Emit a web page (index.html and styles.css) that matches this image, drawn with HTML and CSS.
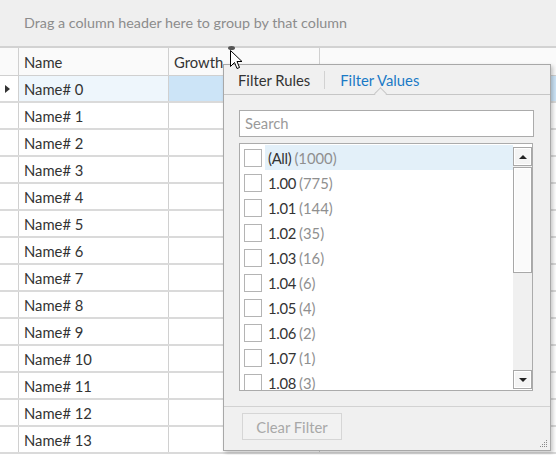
FILE: index.html
```html
<!DOCTYPE html>
<html>
<head>
<meta charset="utf-8">
<link rel="stylesheet" href="styles.css">
</head>
<body>
<div class="app">
  <div class="group-panel">Drag a column header here to group by that column</div>
  <div class="grid">
    <div class="row hdr">
      <div class="c c0"></div>
      <div class="c c1">Name</div>
      <div class="c c2">Growth</div>
      <div class="c c3"></div>
    </div>
    <div class="row sel">
      <div class="c c0"><span class="tri"></span></div>
      <div class="c c1 focus">Name# 0</div>
      <div class="c c2"></div>
      <div class="c c3"></div>
    </div>
    <div class="row"><div class="c c0"></div><div class="c c1">Name# 1</div><div class="c c2"></div><div class="c c3"></div></div>
    <div class="row"><div class="c c0"></div><div class="c c1">Name# 2</div><div class="c c2"></div><div class="c c3"></div></div>
    <div class="row"><div class="c c0"></div><div class="c c1">Name# 3</div><div class="c c2"></div><div class="c c3"></div></div>
    <div class="row"><div class="c c0"></div><div class="c c1">Name# 4</div><div class="c c2"></div><div class="c c3"></div></div>
    <div class="row"><div class="c c0"></div><div class="c c1">Name# 5</div><div class="c c2"></div><div class="c c3"></div></div>
    <div class="row"><div class="c c0"></div><div class="c c1">Name# 6</div><div class="c c2"></div><div class="c c3"></div></div>
    <div class="row"><div class="c c0"></div><div class="c c1">Name# 7</div><div class="c c2"></div><div class="c c3"></div></div>
    <div class="row"><div class="c c0"></div><div class="c c1">Name# 8</div><div class="c c2"></div><div class="c c3"></div></div>
    <div class="row"><div class="c c0"></div><div class="c c1">Name# 9</div><div class="c c2"></div><div class="c c3"></div></div>
    <div class="row"><div class="c c0"></div><div class="c c1">Name# 10</div><div class="c c2"></div><div class="c c3"></div></div>
    <div class="row"><div class="c c0"></div><div class="c c1">Name# 11</div><div class="c c2"></div><div class="c c3"></div></div>
    <div class="row"><div class="c c0"></div><div class="c c1">Name# 12</div><div class="c c2"></div><div class="c c3"></div></div>
    <div class="row"><div class="c c0"></div><div class="c c1">Name# 13</div><div class="c c2"></div><div class="c c3"></div></div>
  </div>

  <div class="popup">
    <div class="tabs">
      <span class="tab">Filter Rules</span>
      <span class="tab-sep"></span>
      <span class="tab active">Filter Values</span>
    </div>
    <div class="body">
      <div class="search">Search</div>
      <div class="list">
        <div class="items">
          <div class="item hl"><span class="cb"></span><span class="lbl">(All)</span><span class="cnt">(1000)</span></div>
          <div class="item"><span class="cb"></span><span class="lbl">1.00</span><span class="cnt">(775)</span></div>
          <div class="item"><span class="cb"></span><span class="lbl">1.01</span><span class="cnt">(144)</span></div>
          <div class="item"><span class="cb"></span><span class="lbl">1.02</span><span class="cnt">(35)</span></div>
          <div class="item"><span class="cb"></span><span class="lbl">1.03</span><span class="cnt">(16)</span></div>
          <div class="item"><span class="cb"></span><span class="lbl">1.04</span><span class="cnt">(6)</span></div>
          <div class="item"><span class="cb"></span><span class="lbl">1.05</span><span class="cnt">(4)</span></div>
          <div class="item"><span class="cb"></span><span class="lbl">1.06</span><span class="cnt">(2)</span></div>
          <div class="item"><span class="cb"></span><span class="lbl">1.07</span><span class="cnt">(1)</span></div>
          <div class="item"><span class="cb"></span><span class="lbl">1.08</span><span class="cnt">(3)</span></div>
        </div>
        <div class="sbar">
          <div class="sbtn"><span class="up"></span></div>
          <div class="thumb"></div>
          <div class="track"></div>
          <div class="sbtn"><span class="down"></span></div>
        </div>
      </div>
    </div>
    <div class="footer">
      <div class="btn">Clear Filter</div>
    </div>
    <svg class="grip" width="8" height="8" viewBox="0 0 8 8">
      <rect x="6" y="0" width="1" height="1" fill="#8a8a8a"/>
      <rect x="4" y="2" width="1" height="1" fill="#8a8a8a"/>
      <rect x="6" y="2" width="1" height="1" fill="#8a8a8a"/>
      <rect x="2" y="4" width="1" height="1" fill="#8a8a8a"/>
      <rect x="4" y="4" width="1" height="1" fill="#8a8a8a"/>
      <rect x="6" y="4" width="1" height="1" fill="#8a8a8a"/>
      <rect x="0" y="6" width="1" height="1" fill="#8a8a8a"/>
      <rect x="2" y="6" width="1" height="1" fill="#8a8a8a"/>
      <rect x="4" y="6" width="1" height="1" fill="#8a8a8a"/>
      <rect x="6" y="6" width="1" height="1" fill="#8a8a8a"/>
    </svg>
  </div>

  <span class="filter-dot"></span>
  <svg class="cursor" width="13" height="20" viewBox="0 0 13 20">
    <path d="M0.5 0.5 L0.5 16.5 L4.5 12.5 L7 18.5 L9.5 17.5 L7 11.5 L12 11.5 Z" fill="#fff" stroke="#000" stroke-width="1" stroke-linejoin="miter"/>
  </svg>
</div>
</body>
</html>
```

FILE: styles.css
```css
* { box-sizing: border-box; }
html, body { margin: 0; padding: 0; }
body {
  width: 556px;
  height: 455px;
  overflow: hidden;
  background: #fff;
  font-family: "Lato", "Open Sans", sans-serif;
  font-size: 14.8px;
  color: #333;
}
.app { position: relative; width: 556px; height: 455px; overflow: hidden; }

.group-panel {
  height: 48px;
  background: #efefef;
  border-bottom: 2px solid #d2d2d2;
  color: #8c8c8c;
  padding-left: 24px;
  line-height: 46px;
  font-size: 14.3px;
}

.grid { display: flex; flex-direction: column; }
.row {
  display: flex;
  height: 27px;
  border-bottom: 2px solid #dadada;
}
.row.hdr { height: 28px; background: #fafafa; border-bottom: 1px solid #d0d0d0; }
.c {
  height: 100%;
  display: flex;
  align-items: center;
  padding-left: 5px;
}
.c0 { width: 19px; border-right: 1px solid #d0d0d0; padding-left: 0; justify-content: center; }
.c1 { width: 150px; border-right: 1px solid #d0d0d0; }
.c2 { width: 151px; border-right: 1px solid #d0d0d0; }
.c3 { flex: 1; }
.hdr .c2 { padding-left: 5px; }
.row.sel .c1, .row.sel .c2, .row.sel .c3 { background: #cce4f7; }
.row.sel .c1.focus { background: #eef6fc; }
.tri {
  width: 0; height: 0;
  border-top: 4px solid transparent;
  border-bottom: 4px solid transparent;
  border-left: 5px solid #333;
  margin-left: -3px;
}

.popup {
  position: absolute;
  left: 223px;
  top: 64px;
  width: 328px;
  height: 387px;
  background: #f0f0f0;
  border: 1px solid #a8a8a8;
  box-shadow: 2px 2px 4px rgba(0,0,0,0.22);
  display: flex;
  flex-direction: column;
}
.tabs {
  position: relative;
  height: 30px;
  border-bottom: 1px solid #c6c6c6;
  display: flex;
  align-items: center;
  padding-left: 14px;
  color: #333;
}
.tab-sep {
  width: 1px;
  height: 18px;
  background: #d2d2d2;
  margin: 0 15px 0 14px;
}
.tab.active { color: #1a7ac6; position: relative; }
.tab.active::after {
  content: "";
  position: absolute;
  left: 36px;
  bottom: -9px;
  width: 8px;
  height: 8px;
  background: #f0f0f0;
  border-left: 1px solid #c6c6c6;
  border-top: 1px solid #c6c6c6;
  transform: rotate(45deg);
}
.body {
  padding: 15px 16px 0 15px;
  display: flex;
  flex-direction: column;
  gap: 6px;
}
.search {
  height: 27px;
  background: #fff;
  border: 1px solid #ababab;
  color: #9a9a9a;
  padding-left: 5px;
  line-height: 25px;
}
.list {
  height: 248px;
  width: 294px;
  background: #fff;
  border: 1px solid #ababab;
  display: flex;
  padding: 1px 0 0 0;
}
.items { flex: 1; overflow: hidden; }
.item {
  height: 25px;
  display: flex;
  align-items: center;
  padding-left: 4px;
}
.cb {
  width: 18px;
  height: 18px;
  border: 1px solid #b4b4b4;
  background: #fff;
  margin-right: 6px;
  flex: none;
}
.item.hl { background: linear-gradient(to right, #fff 0, #fff 25px, #e3f0f9 25px); }
.lbl { color: #333; margin-right: 3px; letter-spacing: -0.3px; }
.cnt { color: #8f8f8f; }
.sbar {
  width: 19px;
  background: #f0f0f0;
  display: flex;
  flex-direction: column;
  margin-top: 2px;
  margin-bottom: 1px;
}
.sbtn {
  height: 19px;
  border: 1px solid #a8a8a8;
  background: #f4f4f4;
  box-shadow: inset 0 0 0 1px #fff;
  display: flex;
  align-items: center;
  justify-content: center;
}
.up { width: 0; height: 0; border-left: 4px solid transparent; border-right: 4px solid transparent; border-bottom: 4px solid #222; }
.down { width: 0; height: 0; border-left: 4px solid transparent; border-right: 4px solid transparent; border-top: 4px solid #222; }
.thumb {
  height: 106px;
  margin-top: 1px;
  border: 1px solid #a8a8a8;
  background: #fafafa;
  box-shadow: inset 0 0 0 1px #fff;
}
.track { flex: 1; }
.footer {
  margin-top: 15px;
  border-top: 1px solid #d2d2d2;
  padding: 6px 0 0 18px;
}
.btn {
  width: 100px;
  height: 27px;
  border: 1px solid #d6d6d6;
  background: #f2f2f2;
  color: #a8a8a8;
  display: flex;
  align-items: center;
  justify-content: center;
}
.grip { position: absolute; right: 2px; bottom: 2px; }

.filter-dot {
  position: absolute;
  left: 228px;
  top: 46px;
  width: 7px;
  height: 4px;
  border-radius: 50%;
  background: #555;
}
.cursor { position: absolute; left: 230px; top: 50px; }
```
